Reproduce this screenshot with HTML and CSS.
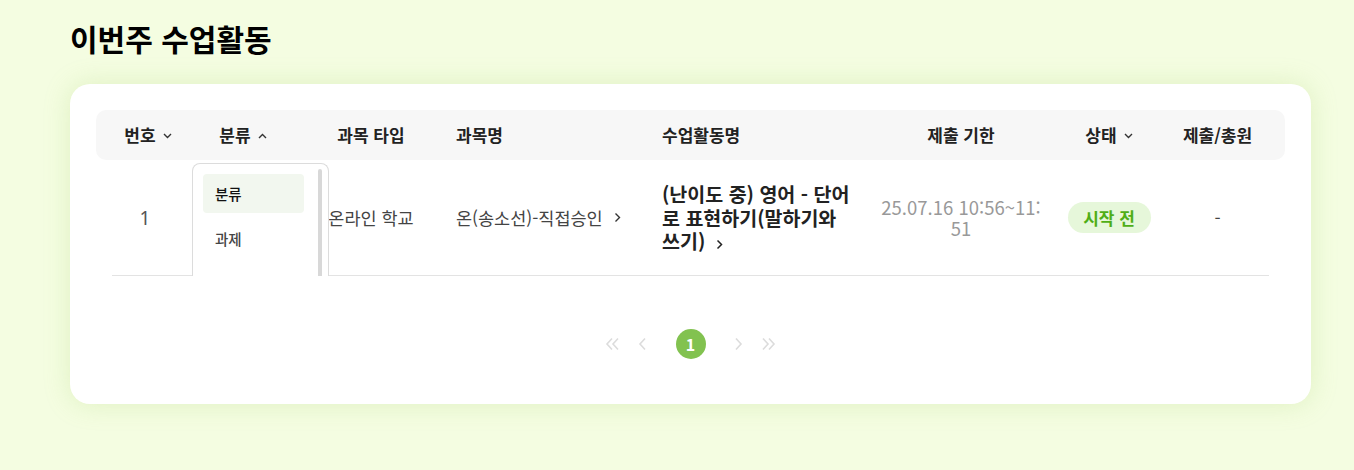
FILE: index.html
```html
<!DOCTYPE html>
<html lang="ko">
<head>
<meta charset="utf-8">
<title>이번주 수업활동</title>
<link rel="stylesheet" href="styles.css">
</head>
<body>
<main class="page">
  <h1 class="title">이번주 수업활동</h1>
  <section class="card">
    <div class="table">
      <div class="thead grid">
        <div class="th center"><span>번호</span>
          <svg class="caret" width="9" height="6" viewBox="0 0 9 6"><path d="M1 1l3.5 3.5L8 1" fill="none" stroke="#333" stroke-width="1.4"/></svg>
        </div>
        <div class="th center dd-host"><span>분류</span>
          <svg class="caret" width="9" height="6" viewBox="0 0 9 6"><path d="M1 5l3.5-3.5L8 5" fill="none" stroke="#333" stroke-width="1.4"/></svg>
          <div class="dropdown">
            <ul class="dd-list">
              <li class="dd-item active">분류</li>
              <li class="dd-item">과제</li>
            </ul>
            <div class="dd-scroll"></div>
          </div>
        </div>
        <div class="th center">과목 타입</div>
        <div class="th left">과목명</div>
        <div class="th left">수업활동명</div>
        <div class="th center">제출 기한</div>
        <div class="th center"><span>상태</span>
          <svg class="caret" width="9" height="6" viewBox="0 0 9 6"><path d="M1 1l3.5 3.5L8 1" fill="none" stroke="#333" stroke-width="1.4"/></svg>
        </div>
        <div class="th center">제출/총원</div>
      </div>
      <div class="tbody">
        <div class="row grid">
          <div class="td center num">1</div>
          <div class="td center"></div>
          <div class="td center">온라인 학교</div>
          <div class="td left subject">온(송소선)-직접승인
            <svg class="arrow" width="7" height="11" viewBox="0 0 7 11"><path d="M1.5 1.5l4 4-4 4" fill="none" stroke="#333" stroke-width="1.4"/></svg>
          </div>
          <div class="td left activity">(난이도 중) 영어 - 단어로 표현하기(말하기와 쓰기)<svg class="arrow" width="7" height="11" viewBox="0 0 7 11"><path d="M1.5 1.5l4 4-4 4" fill="none" stroke="#222" stroke-width="1.5"/></svg></div>
          <div class="td center date">25.07.16 10:56~11:51</div>
          <div class="td center"><span class="badge">시작 전</span></div>
          <div class="td center">-</div>
        </div>
        <div class="divider"></div>
      </div>
    </div>
    <nav class="pager">
      <span class="pg"><svg width="15" height="14" viewBox="0 0 15 14"><path d="M7 1.5L2 7l5 5.5M13 1.5L8 7l5 5.5" fill="none" stroke="#dcdcdc" stroke-width="1.6"/></svg></span>
      <span class="pg"><svg width="9" height="14" viewBox="0 0 9 14"><path d="M7 1.5L2 7l5 5.5" fill="none" stroke="#dcdcdc" stroke-width="1.6"/></svg></span>
      <span class="pg current">1</span>
      <span class="pg"><svg width="9" height="14" viewBox="0 0 9 14"><path d="M2 1.5L7 7l-5 5.5" fill="none" stroke="#dcdcdc" stroke-width="1.6"/></svg></span>
      <span class="pg"><svg width="15" height="14" viewBox="0 0 15 14"><path d="M2 1.5L7 7l-5 5.5M8 1.5L13 7l-5 5.5" fill="none" stroke="#dcdcdc" stroke-width="1.6"/></svg></span>
    </nav>
  </section>
</main>
</body>
</html>
```

FILE: styles.css
```css
* { box-sizing: border-box; }
html, body { margin: 0; padding: 0; }
body {
  background: #f4fde1;
  font-family: "Noto Sans CJK KR", "Noto Sans", sans-serif;
  color: #333;
  width: 1354px;
  height: 470px;
  overflow: hidden;
}
.page { padding: 18px 43px 0 70px; }
.title {
  margin: 0;
  font-size: 30px;
  font-weight: 700;
  line-height: 40px;
  color: #000;
}
.card {
  margin-top: 26px;
  height: 320px;
  background: #fff;
  border-radius: 20px;
  padding: 26px;
  box-shadow: 0 0 26px rgba(170, 210, 110, 0.28);
}
.grid {
  display: grid;
  grid-template-columns: 104px 86px 170px 206px 204px 190px 106px 111px;
  padding-right: 12px;
}
.thead {
  height: 50px;
  background: #f7f7f7;
  border-radius: 10px;
  align-items: center;
}
.th {
  font-size: 17px;
  font-weight: 700;
  color: #222;
  display: flex;
  align-items: center;
  gap: 7px;
  line-height: 22px;
}
.center { justify-content: center; text-align: center; }
.left { justify-content: flex-start; text-align: left; }
.caret { display: block; margin-top: 1px; }
.dd-host { position: relative; }
.dropdown {
  position: absolute;
  left: -8px;
  top: 39px;
  width: 137px;
  height: 113px;
  background: #fff;
  border: 1px solid #dcdcdc;
  border-bottom: none;
  border-radius: 8px 8px 0 0;
  display: flex;
  padding: 10px 5px 0 10px;
  z-index: 2;
}
.dd-list {
  list-style: none;
  margin: 0;
  padding: 0;
  width: 101px;
  display: flex;
  flex-direction: column;
  gap: 6px;
}
.dd-item {
  height: 39px;
  display: flex;
  align-items: center;
  padding-left: 12px;
  font-size: 14.5px;
  font-weight: 500;
  color: #444;
  border-radius: 4px;
}
.dd-item.active { background: #f2f7ef; color: #111; }
.dd-scroll {
  margin-left: 14px;
  margin-top: -5px;
  width: 4px;
  height: 107px;
  background: #d8d8d8;
  border-radius: 2px 2px 0 0;
}
.row {
  height: 115px;
  align-items: center;
}
.td {
  font-size: 17.5px;
  color: #444;
  display: flex;
  align-items: center;
  line-height: 22px;
}
.num {
  padding-right: 6px;
  font-family: "Noto Sans", sans-serif;
  font-size: 19px;
  font-weight: 400;
  color: #555;
}
.subject .arrow { margin-left: 11px; }
.activity {
  display: block;
  font-size: 19.5px;
  font-weight: 700;
  color: #222;
  line-height: 23.5px;
  padding-right: 12px;
}
.activity .arrow { margin-left: 11px; vertical-align: -1px; }
.date {
  color: #999;
  font-size: 18.5px;
  line-height: 21px;
  word-break: break-all;
  padding: 0 12px;
}
.badge {
  display: inline-flex;
  align-items: center;
  justify-content: center;
  width: 83px;
  height: 31px;
  border-radius: 16px;
  background: #e6f7da;
  color: #4fae17;
  font-weight: 700;
  font-size: 17px;
}
.divider {
  height: 1px;
  margin: 0 16px;
  background: #e3e3e3;
}
.pager {
  margin-top: 53px;
  display: flex;
  justify-content: center;
  align-items: center;
}
.pg {
  width: 30px;
  height: 30px;
  display: flex;
  align-items: center;
  justify-content: center;
}
.pg.current {
  margin: 0 18px;
  border-radius: 50%;
  background: #82c250;
  color: #fff;
  font-weight: 700;
  font-size: 16px;
}
```
